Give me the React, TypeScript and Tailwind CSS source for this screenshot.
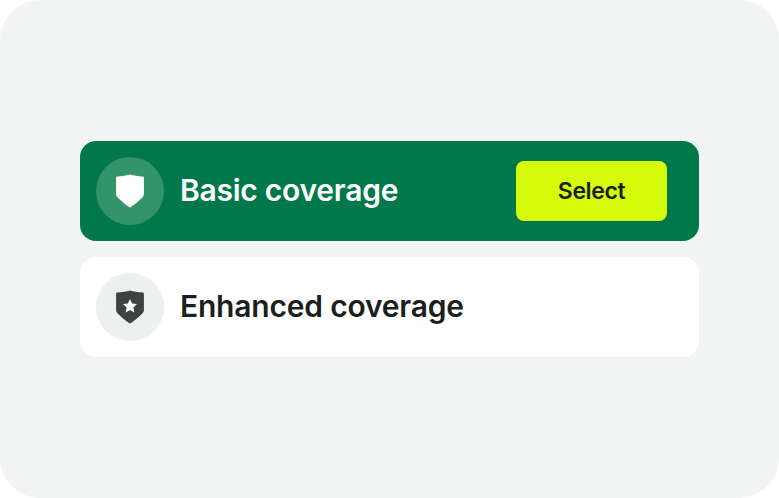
function Shield({ fill, star }: { fill: string; star?: boolean }) {
  return (
    <svg width="28" height="34" viewBox="0 0 28 34" aria-hidden="true">
      <path d="M14 0.6C17.5 1.7 22 2.4 26.6 2.6C27.4 2.6 27.9 3.1 27.9 3.9V19.8C27.9 21.4 27.5 22.4 26.4 23.4C23.4 26.4 19.2 30 15 33C14.4 33.5 13.6 33.5 13 33C8.8 30 4.6 26.4 1.6 23.4C0.5 22.4 0.1 21.4 0.1 19.8V3.9C0.1 3.1 0.6 2.6 1.4 2.6C6 2.4 10.5 1.7 14 0.6Z" fill={fill} />
      {star && <path d="M14 9L16.1 13.5L21 14.1L17.4 17.5L18.3 22.4L14 20L9.7 22.4L10.6 17.5L7 14.1L11.9 13.5Z" fill="#ffffff" />}
    </svg>
  );
}

export default function App() {
  return (
    <div className="w-[779px] h-[498px] bg-white">
      <div className="w-full h-full rounded-[40px] bg-[#f2f4f4] flex flex-col justify-center px-20 gap-4 font-['Inter',sans-serif]">
        <div className="w-[619px] h-[100px] rounded-2xl bg-[#00784a] flex items-center pl-4 pr-8">
          <div className="w-[68px] h-[68px] rounded-full bg-[#339369] flex items-center justify-center">
            <Shield fill="#ffffff" />
          </div>
          <span className="ml-4 pb-[2px] text-[30px] font-semibold tracking-[-0.25px] text-white">Basic coverage</span>
          <button className="ml-auto w-[151px] h-[60px] rounded-lg bg-[#d6fb0a] text-[23px] font-semibold tracking-[-0.4px] text-[#1b1f1e]">Select</button>
        </div>
        <div className="w-[619px] h-[100px] rounded-2xl bg-white flex items-center pl-4 pr-8">
          <div className="w-[68px] h-[68px] rounded-full bg-[#ecf0ef] flex items-center justify-center">
            <Shield fill="#3e4341" star />
          </div>
          <span className="ml-4 pb-[2px] text-[30px] font-semibold tracking-[-0.2px] text-[#1b1f1e]">Enhanced coverage</span>
        </div>
      </div>
    </div>
  );
}
